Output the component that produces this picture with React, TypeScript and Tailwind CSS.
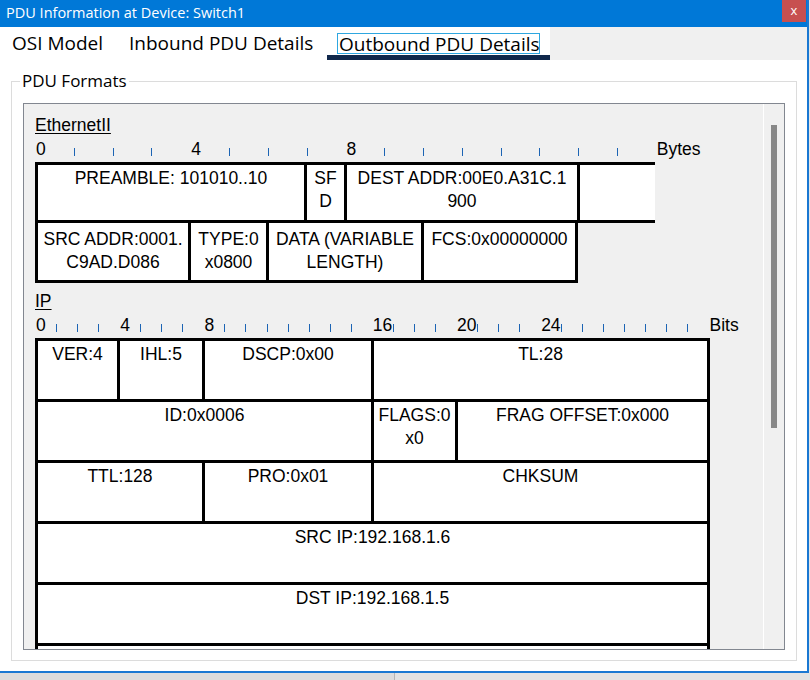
import React from "react";

const UI = "font-['Open_Sans',sans-serif]";
const ARIAL = "font-['Liberation_Sans',Arial,sans-serif]";

type CellProps = {
  w: string;
  lines?: string[];
  right?: boolean;
  pt?: string;
};

function Cell({ w, lines = [], right = false, pt = "pt-[2px]" }: CellProps) {
  return (
    <div
      className={`${w} shrink-0 border-y-[3px] border-l-[3px] border-black bg-white ${
        right ? "border-r-[3px]" : ""
      } flex flex-col items-center ${pt}`}
    >
      {lines.map((l) => (
        <span key={l} className="whitespace-nowrap">
          {l}
        </span>
      ))}
    </div>
  );
}

type RulerProps = {
  slots: number;
  slotW: string;
  labels: number[];
  unit: string;
};

function Ruler({ slots, slotW, labels, unit }: RulerProps) {
  return (
    <div className="flex h-[24px]">
      {Array.from({ length: slots }).map((_, i) => (
        <div key={i} className={`${slotW} shrink-0`}>
          {labels.includes(i) ? (
            <span className="ml-[1px] whitespace-nowrap">{i}</span>
          ) : (
            <div className="mt-[10px] h-[8px] w-px bg-[#1c64b4]" />
          )}
        </div>
      ))}
      <span className="ml-[1px]">{unit}</span>
    </div>
  );
}

function SectionTitle({ children }: { children: React.ReactNode }) {
  return (
    <div className="h-[24px]">
      <span className="underline underline-offset-[2px]">{children}</span>
    </div>
  );
}

export default function App() {
  return (
    <div className="flex h-[680px] w-[810px] flex-col bg-[#e6e6e6]">
      <div className="flex h-[673px] w-[809px] flex-col border-b-2 border-r-2 border-[#1a78d2] bg-white">
        {/* title bar */}
        <div className="flex h-[27px] shrink-0 items-start justify-between bg-[#0078d7]">
          <span className={`${UI} pl-[6px] text-[14.5px] leading-[26px] text-white`}>
            PDU Information at Device: Switch1
          </span>
          <div className={`${UI} mr-[1px] flex h-[22px] w-[24px] items-center justify-center bg-[#c75050] text-[13px] text-white`}>
            x
          </div>
        </div>

        {/* tabs */}
        <div className={`${UI} flex h-[33px] shrink-0 text-[19px] leading-[18px] text-black`}>
          <div className="w-[118px] shrink-0 pl-[12px] pt-[7px]">OSI Model</div>
          <div className="w-[209px] shrink-0 pl-[11px] pt-[7px]">Inbound PDU Details</div>
          <div className="flex w-[223px] shrink-0 flex-col">
            <div className="ml-[10px] mt-[6px] h-[21px] w-[203px] whitespace-nowrap border border-[#2ea7e0] pl-[1px] pt-[1px]">
              Outbound PDU Details
            </div>
            <div className="mt-[1px] h-[5px] bg-[#10284b]" />
          </div>
          <div className="flex-1 bg-[#f0f0f0]" />
        </div>

        {/* body */}
        <div className="flex-1 pt-[11px]">
          <fieldset className="ml-[11px] w-[786px] border border-[#dcdcdc] px-[11px] pb-[10px] pt-[12px]">
            <legend className={`${UI} -ml-[3px] px-[2px] text-[17px] leading-[20px] text-black`}>
              PDU Formats
            </legend>
            <div className="flex h-[547px] border border-[#828790] bg-[#f0f0f0]">
              <div
                className={`${ARIAL} w-[739px] shrink-0 overflow-hidden pl-[11px] pt-[10px] text-[17.5px] leading-[23px] text-black`}
              >
                <SectionTitle>EthernetII</SectionTitle>
                <Ruler slots={16} slotW="w-[38.8px]" labels={[0, 4, 8]} unit="Bytes" />
                <div className="flex h-[61px]">
                  <Cell w="w-[269px]" lines={["PREAMBLE: 101010..10"]} />
                  <Cell w="w-[40px]" lines={["SF", "D"]} />
                  <Cell w="w-[233px]" lines={["DEST ADDR:00E0.A31C.1", "900"]} />
                  <Cell w="w-[78px]" />
                </div>
                <div className="-mt-[3px] flex h-[63px]">
                  <Cell w="w-[153px]" pt="pt-[5px]" lines={["SRC ADDR:0001.", "C9AD.D086"]} />
                  <Cell w="w-[78px]" pt="pt-[5px]" lines={["TYPE:0", "x0800"]} />
                  <Cell w="w-[155px]" pt="pt-[5px]" lines={["DATA (VARIABLE", "LENGTH)"]} />
                  <Cell w="w-[157px]" pt="pt-[5px]" right lines={["FCS:0x00000000"]} />
                </div>

                <div className="mt-[7px]">
                  <SectionTitle>IP</SectionTitle>
                </div>
                <Ruler slots={32} slotW="w-[21.06px]" labels={[0, 4, 8, 16, 20, 24]} unit="Bits" />
                <div className="flex h-[64px]">
                  <Cell w="w-[82px]" lines={["VER:4"]} />
                  <Cell w="w-[85px]" lines={["IHL:5"]} />
                  <Cell w="w-[169px]" lines={["DSCP:0x00"]} />
                  <Cell w="w-[339px]" right lines={["TL:28"]} />
                </div>
                <div className="-mt-[3px] flex h-[64px]">
                  <Cell w="w-[336px]" lines={["ID:0x0006"]} />
                  <Cell w="w-[84px]" lines={["FLAGS:0", "x0"]} />
                  <Cell w="w-[255px]" right lines={["FRAG OFFSET:0x000"]} />
                </div>
                <div className="-mt-[3px] flex h-[64px]">
                  <Cell w="w-[167px]" lines={["TTL:128"]} />
                  <Cell w="w-[169px]" lines={["PRO:0x01"]} />
                  <Cell w="w-[339px]" right lines={["CHKSUM"]} />
                </div>
                <div className="-mt-[3px] flex h-[64px]">
                  <Cell w="w-[675px]" right lines={["SRC IP:192.168.1.6"]} />
                </div>
                <div className="-mt-[3px] flex h-[64px]">
                  <Cell w="w-[675px]" right lines={["DST IP:192.168.1.5"]} />
                </div>
                <div className="-mt-[3px] flex h-[64px]">
                  <Cell w="w-[675px]" right />
                </div>
              </div>
              <div className="w-px shrink-0 bg-white" />
              <div className="flex-1 pl-[7px] pt-[21px]">
                <div className="h-[303px] w-[6px] bg-[#888888]" />
              </div>
            </div>
          </fieldset>
        </div>
      </div>
      <div className="flex flex-1">
        <div className="w-[395px] border-r border-[#b5b5b5] bg-[#dcdcdc]" />
        <div className="flex-1 bg-[#e2e2e2]" />
      </div>
    </div>
  );
}
